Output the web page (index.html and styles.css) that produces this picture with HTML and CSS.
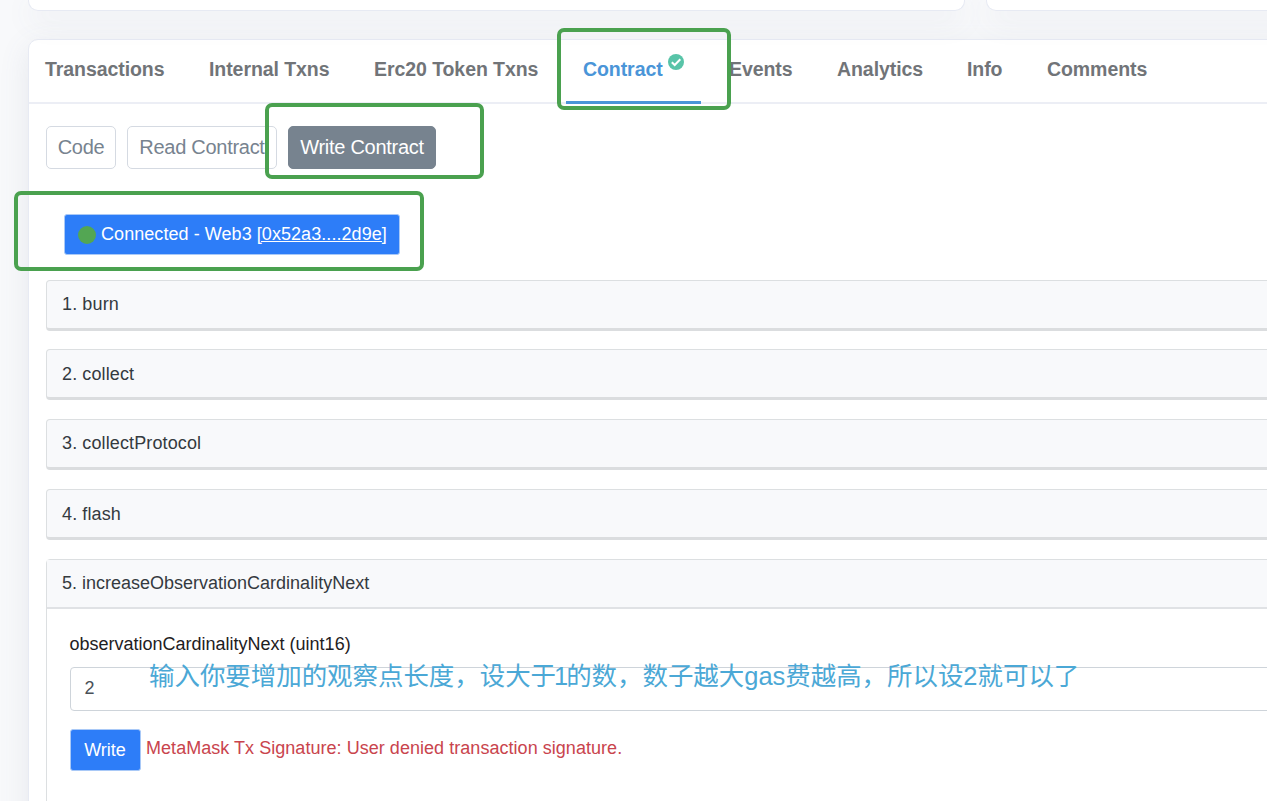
FILE: index.html
```html
<!DOCTYPE html>
<html lang="en">
<head>
<meta charset="utf-8">
<title>Contract</title>
<link rel="stylesheet" href="styles.css">
</head>
<body>
<div class="page">
  <div class="summary">
    <div class="card summary-card summary-left"></div>
    <div class="card summary-card summary-right"></div>
  </div>
  <main class="card main">
    <nav class="tabs">
      <a class="tab t-transactions">Transactions</a>
      <a class="tab t-internal">Internal Txns</a>
      <a class="tab t-erc">Erc20 Token Txns</a>
      <a class="tab active t-contract"><span>Contract</span><svg class="check" viewBox="0 0 16 16"><circle cx="8" cy="8" r="8"/><path d="M3.8 8.2 6.7 11 12.3 5.3"/></svg></a>
      <a class="tab t-events">Events</a>
      <a class="tab t-analytics">Analytics</a>
      <a class="tab t-info">Info</a>
      <a class="tab t-comments">Comments</a>
    </nav>
    <div class="content">
      <div class="modes">
        <button class="mode m-code">Code</button>
        <button class="mode m-read">Read Contract</button>
        <button class="mode m-write selected">Write Contract</button>
      </div>
      <button class="connect"><i class="dot"></i><span class="connect-text">Connected - Web3 <u>[0x52a3....2d9e]</u></span></button>
      <div class="functions">
        <div class="fn"><span>1. burn</span></div>
        <div class="fn low"><span>2. collect</span></div>
        <div class="fn"><span>3. collectProtocol</span></div>
        <div class="fn low"><span>4. flash</span></div>
        <section class="fn-open">
          <div class="fn-head">5. increaseObservationCardinalityNext</div>
          <div class="fn-body">
            <label class="label">observationCardinalityNext (uint16)</label>
            <div class="field">2</div>
            <div class="submit"><button class="write">Write</button><span class="error">MetaMask Tx Signature: User denied transaction signature.</span></div>
          </div>
        </section>
      </div>
    </div>
  </main>
  <div class="mark mark-tab"></div>
  <div class="mark mark-mode"></div>
  <div class="mark mark-connect"></div>
  <div class="note" lang="zh-CN">输入你要增加的观察点长度，设大于<span class="one">1</span>的数，数子越大<span class="latin">gas</span>费越高，所以设<span class="two">2</span>就可以了</div>
</div>
</body>
</html>
```
FILE: styles.css
```css
* { box-sizing: border-box; }
body { margin: 0; background: #f8f9fb; font-family: "Liberation Sans", Arial, sans-serif; overflow: hidden; }
button { font: inherit; margin: 0; }
.page { position: relative; width: 1267px; height: 801px; overflow: hidden; padding-left: 28px; }
.card { background: #fff; border: 1px solid #e7eaf3; box-shadow: 0 8px 30px rgba(100, 110, 130, .12); }
.summary { display: flex; gap: 21px; width: 1400px; height: 11px; margin-bottom: 28px; }
.summary-card { border-top: 0; border-radius: 0 0 10px 10px; }
.summary-left { width: 937px; }
.summary-right { width: 400px; }
.main { width: 1400px; height: 900px; border-radius: 10px 10px 0 0; }
.tabs { display: flex; gap: 45px; height: 64px; padding-left: 16px; border-bottom: 2px solid #eceef5; font-size: 19.5px; font-weight: 700; white-space: nowrap; }
.tab { line-height: 59px; color: #717478; letter-spacing: -.07px; }
.t-transactions { width: 119px; }
.t-internal { width: 120px; }
.t-erc { width: 164px; }
.t-contract { width: 101px; }
.t-events { width: 63px; }
.t-analytics { width: 85px; }
.t-info { width: 35px; }
.active { color: #4a95d8; display: flex; box-sizing: content-box; height: 61px; padding: 0 17px; margin: 0 -17px; border-bottom: 3px solid #4a95d8; }
.check { width: 16px; height: 16px; margin: 14px 0 0 5px; flex: none; }
.check circle { fill: #58c4a8; }
.check path { fill: none; stroke: #fff; stroke-width: 2; }
.content { padding: 22px 0 0 17px; }
.modes { display: flex; gap: 11px; height: 43px; font-size: 20px; }
.mode { height: 43px; padding: 0; border: 1px solid #d5dae2; border-radius: 5px; background: #fff; color: #77838f; white-space: nowrap; line-height: 39px; letter-spacing: -.28px; }
.m-code { width: 70px; }
.m-read { width: 150px; }
.m-write { width: 148px; }
.selected { background: #77838f; border-color: #77838f; color: #fff; }
.connect { display: flex; align-items: center; width: 336px; height: 41px; margin: 45px 0 0 18px; padding: 0 0 0 13px; border: 1px solid #a9c9f7; border-radius: 3px; background: #2d7df8; color: #fff; font-size: 18px; letter-spacing: .06px; white-space: nowrap; }
.dot { width: 18px; height: 18px; margin-right: 5px; border-radius: 50%; background: #53a653; }
.functions { display: grid; gap: 18.75px; margin-top: 24.5px; font-size: 18px; color: #343a40; }
.fn { height: 51px; padding-left: 15px; border: 1px solid #dcdfe1; border-bottom: 3px solid #dbdddf; border-radius: 4px; background: #f8f9fb; line-height: 47px; letter-spacing: .12px; }
.low { line-height: 49px; }
.fn-open { height: 300px; border: 1px solid #dcdfe1; border-radius: 4px 4px 0 0; }
.fn-head { height: 49px; padding-left: 15px; border-bottom: 2px solid #e0e2e5; background: #f8f9fb; line-height: 47px; }
.fn-body { padding: 24px 0 0 22.5px; color: #1e2022; }
.label { display: block; height: 34px; line-height: 22px; }
.field { height: 44px; padding-left: 14px; border: 1px solid #ced4da; border-radius: 4px; line-height: 41px; color: #495057; }
.submit { display: flex; margin-top: 18px; }
.write { width: 71px; height: 42px; padding: 0; border: 1px solid #a9c9f7; border-radius: 3px; background: #2d7df8; color: #fff; line-height: 36px; }
.error { margin-left: 5.5px; line-height: 38px; letter-spacing: .04px; color: #c9444d; white-space: nowrap; }
.mark { position: absolute; border: 4px solid #4aa14f; border-radius: 7px; }
.mark-tab { left: 557px; top: 28px; width: 174px; height: 82px; }
.mark-mode { left: 265px; top: 103px; width: 219px; height: 76px; }
.mark-connect { left: 14px; top: 191px; width: 410px; height: 80px; }
.note { position: absolute; left: 149px; top: 656px; font: 400 25.45px/36px "Noto Sans CJK SC", sans-serif; color: #4ba8d6; white-space: nowrap; }
.one, .two, .latin { font-family: "Liberation Sans", Arial, sans-serif; }
.one { margin: 0 -2px; }
```
